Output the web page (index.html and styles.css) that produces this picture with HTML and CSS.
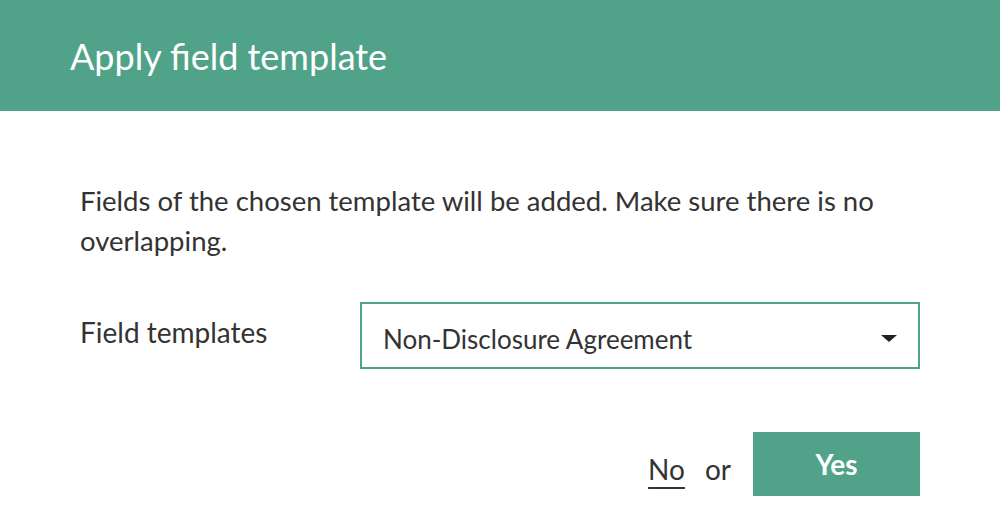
FILE: index.html
```html
<!DOCTYPE html>
<html lang="en">
<head>
<meta charset="utf-8">
<title>Apply field template</title>
<link rel="stylesheet" href="styles.css">
</head>
<body>
<div class="dialog">
  <header class="header">
    <h1 class="title">Apply field template</h1>
  </header>
  <main class="content">
    <p class="message">Fields of the chosen template will be added. Make sure there is no overlapping.</p>
    <div class="field-row">
      <label class="field-label">Field templates</label>
      <div class="select">
        <span class="select-value">Non-Disclosure Agreement</span>
        <span class="select-arrow"></span>
      </div>
    </div>
    <div class="actions">
      <a class="no-link" href="#">No</a>
      <span class="or">or</span>
      <button class="yes-btn" type="button">Yes</button>
    </div>
  </main>
</div>
</body>
</html>
```
FILE: styles.css
```css
html, body {
  margin: 0;
  padding: 0;
  background: #ffffff;
}
body {
  font-family: Lato, "Open Sans", sans-serif;
  color: #333333;
}
.header {
  height: 111px;
  background: #50a389;
  display: flex;
  align-items: center;
  padding-left: 70px;
}
.title {
  margin: 0;
  font-size: 36px;
  font-weight: 400;
  color: #ffffff;
  line-height: 40px;
}
.content {
  padding: 0 80px;
}
.message {
  margin: 70px 0 0 0;
  font-size: 27.5px;
  line-height: 40px;
}
.field-row {
  display: flex;
  align-items: flex-start;
  margin-top: 41px;
}
.field-label {
  width: 280px;
  font-size: 28px;
  line-height: 37px;
  padding-top: 12px;
}
.select {
  width: 560px;
  height: 67px;
  box-sizing: border-box;
  border: 2px solid #50a389;
  display: flex;
  align-items: flex-start;
  justify-content: space-between;
  padding: 17px 21px 0 21px;
}
.select-value {
  font-size: 26px;
  line-height: 37px;
}
.select-arrow {
  width: 0;
  height: 0;
  border-left: 8px solid transparent;
  border-right: 8px solid transparent;
  border-top: 7px solid #222222;
  margin-top: 14px;
}
.actions {
  display: flex;
  justify-content: flex-end;
  align-items: center;
  gap: 20px;
  margin-top: 63px;
}
.no-link, .or {
  font-size: 28px;
  line-height: 37px;
  padding-top: 10px;
  color: #333333;
}
.no-link {
  text-decoration: underline;
  text-decoration-thickness: 2px;
  text-underline-offset: 7px;
}
.yes-btn {
  width: 167px;
  height: 64px;
  border: none;
  background: #50a389;
  color: #ffffff;
  font-family: Lato, "Open Sans", sans-serif;
  font-size: 28px;
  font-weight: 700;
  margin-left: 2px;
  padding: 0;
}
```
